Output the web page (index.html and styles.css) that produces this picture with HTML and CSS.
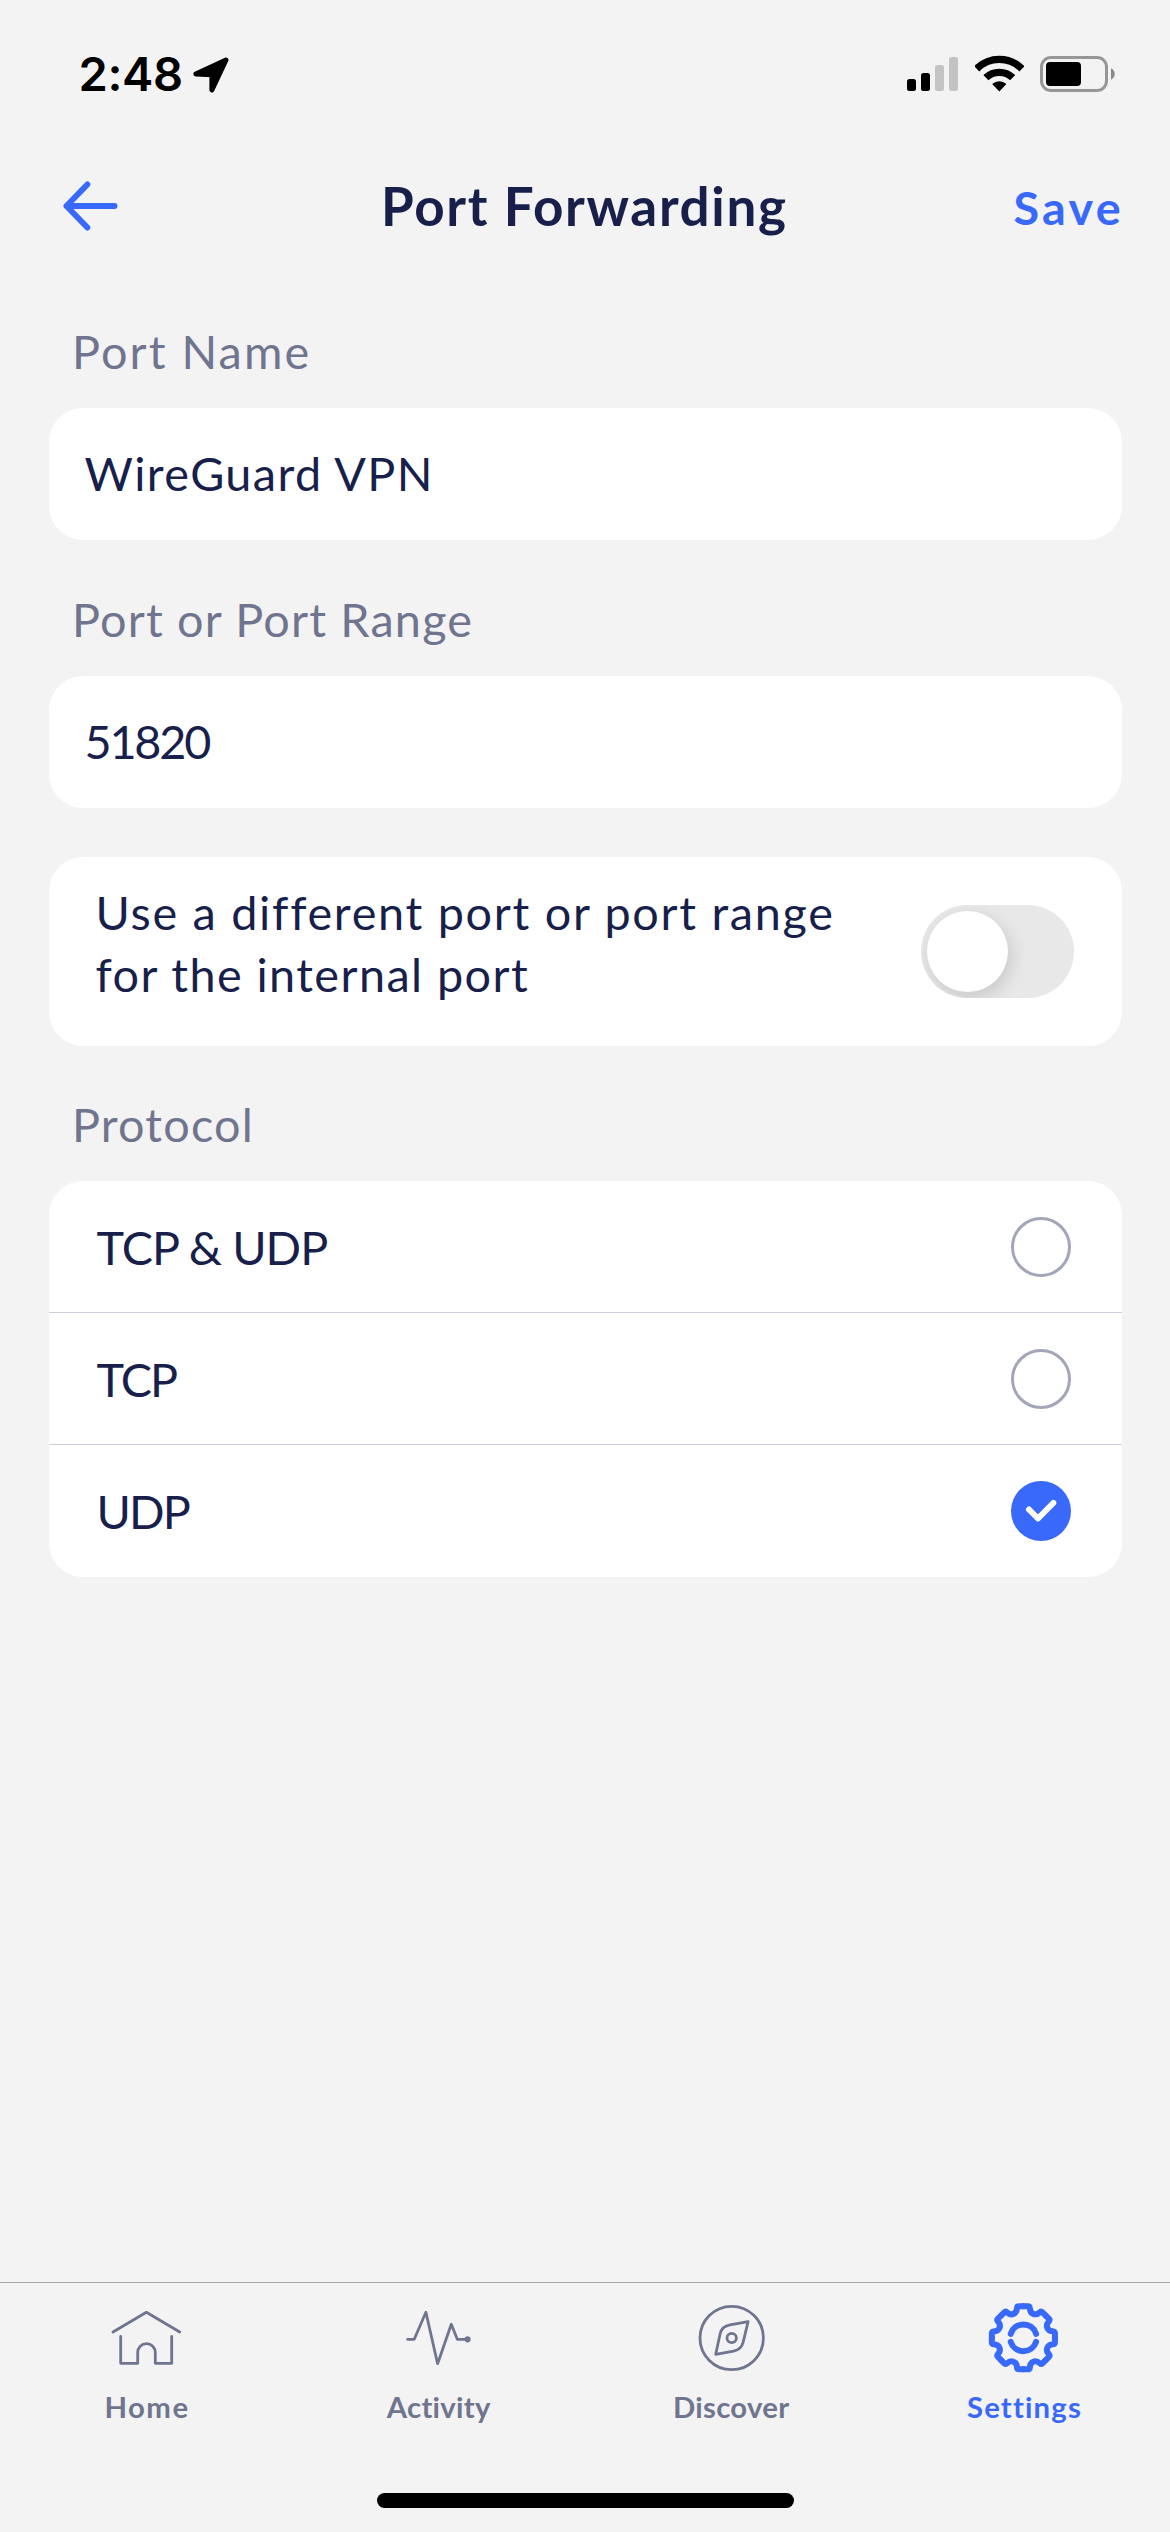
FILE: index.html
```html
<!DOCTYPE html>
<html lang="en">
<head>
<meta charset="utf-8">
<title>Port Forwarding</title>
<link rel="stylesheet" href="styles.css">
</head>
<body>
<div class="screen">
  <div class="status">
    <span class="time">2:48</span>
    <svg class="location" width="36" height="36" viewBox="0 0 36 36"><path d="M2.8 17 33 3 18.9 33V17.8Z" stroke="#000" stroke-width="5" stroke-linejoin="round"/></svg>
    <div class="indicators">
      <svg width="52" height="36" viewBox="0 0 52 36"><rect y="23" width="9" height="12" rx="2.5"/><rect x="14" y="17" width="9" height="18" rx="2.5"/><g fill="#c3c3c3"><rect x="28" y="9" width="9" height="26" rx="2.5"/><rect x="42" y="1" width="9" height="34" rx="2.5"/></g></svg>
      <svg class="wifi" width="49" height="37" viewBox="0 0 49 37"><g fill="none" stroke="#000" stroke-width="7.3"><path d="M1.7 13.8A32 32 0 0 1 46.9 13.8"/><path d="M10.9 22.7A19.3 19.3 0 0 1 37.7 22.7"/></g><path d="M24.3 36.4 17.2 29A10.4 10.4 0 0 1 31.4 29Z"/></svg>
      <svg class="battery" width="76" height="36" viewBox="0 0 76 36"><rect x="1.5" y="1.5" width="65" height="33" rx="9.5" fill="none" stroke="#969696" stroke-width="3"/><rect x="6" y="6" width="35" height="24" rx="4"/><path d="M71 12.3C76 14.5 76 21.5 71 23.7Z" fill="#8a8a8a"/></svg>
    </div>
  </div>

  <header class="nav">
    <svg width="56" height="50" viewBox="0 0 56 50" fill="none" stroke="#3969fa" stroke-width="6" stroke-linecap="round" stroke-linejoin="round"><path d="M51.5 25H3.5M24.3 3.5 3.5 25 24.3 46.5"/></svg>
    <h1>Port Forwarding</h1>
    <a class="save">Save</a>
  </header>

  <main>
    <label class="label name-label">Port Name</label>
    <div class="card field name">WireGuard VPN</div>
    <label class="label">Port or Port Range</label>
    <div class="card field number">51820</div>
    <div class="card option">
      <p><span class="line">Use a different port or port range</span> <span class="line second">for the internal port</span></p>
      <div class="toggle"><div class="knob"></div></div>
    </div>
    <label class="label">Protocol</label>
    <div class="card list">
      <div class="row both"><span>TCP &amp; UDP</span><i class="radio"></i></div>
      <div class="row"><span>TCP</span><i class="radio"></i></div>
      <div class="row"><span>UDP</span><i class="radio checked"><svg width="60" height="60" viewBox="0 0 60 60" fill="none" stroke="#fff" stroke-width="6" stroke-linecap="round" stroke-linejoin="round"><path d="M18 28.5 27 37.5 42.3 22"/></svg></i></div>
    </div>
  </main>

  <footer>
    <nav class="tabs">
      <a class="tab home"><svg viewBox="0 0 70 70"><path d="M2 29 35.4 9.3 68.7 29M9.7 33.3V60.3H26.7V49.4A8.8 8.8 0 0 1 44.3 49.4V60.3H60.7V33.3"/></svg><span>Home</span></a>
      <a class="tab"><svg viewBox="0 0 70 70"><path d="M3.6 36.3H10.2L21.9 9.3 33.6 60.7 47.3 21.3 53.3 36.3H63.6"/><circle cx="63.6" cy="36.3" r="1.7"/></svg><span>Activity</span></a>
      <a class="tab discover"><svg viewBox="0 0 70 70"><circle cx="35.7" cy="35" r="31.7"/><path d="M52.1 18.7 34 21.9Q26 23.3 24.2 30.5L19.7 51.3 37.5 48.2Q45.5 46.5 47.2 39Z"/><circle cx="35.7" cy="35" r="4.7"/></svg><span>Discover</span></a>
      <a class="tab active"><svg viewBox="0 0 70 70"><defs><path id="tooth" d="M0-31.5H4.5Q6.2-31.5 6.4-29.8Q6.6-25.2 9.9-23.9Q13.2-22.5 16.5-25.6Q17.9-26.7 19.1-25.5L22.3-22.3"/></defs><g transform="translate(34.4 34.8)"><use href="#tooth"/><use href="#tooth" transform="rotate(45)"/><use href="#tooth" transform="rotate(90)"/><use href="#tooth" transform="rotate(135)"/><use href="#tooth" transform="rotate(180)"/><use href="#tooth" transform="rotate(225)"/><use href="#tooth" transform="rotate(270)"/><use href="#tooth" transform="rotate(315)"/><path d="M-12.7-4A13.3 13.3 0 0 1 12.7-4M-12.7 4A13.3 13.3 0 0 0 12.7 4"/></g></svg><span>Settings</span></a>
    </nav>
    <div class="home-bar"></div>
  </footer>
</div>
</body>
</html>
```
FILE: styles.css
```css
* { box-sizing: border-box; }

body {
  margin: 0;
  background: #f3f3f3;
  color: #181f4b;
  font: 400 46.75px/60px Lato, "Liberation Sans", sans-serif;
}

svg { display: block; flex: none; }

.screen {
  width: 1170px;
  height: 2532px;
  display: flex;
  flex-direction: column;
}

.status {
  height: 141px;
  padding: 7px 54px 0 78.6px;
  display: flex;
  align-items: center;
  color: #000;
}
.time {
  width: 114px;
  font: 600 47px/60px Inter, sans-serif;
  letter-spacing: -0.39px;
}
.location { margin-top: 2px; }
.indicators {
  margin-left: auto;
  display: flex;
  align-items: center;
}
.wifi { margin: 0 16px 2px; }

.nav {
  height: 129px;
  padding: 0 46px 0 63px;
  display: grid;
  grid-template-columns: 318px auto 1fr;
  align-items: center;
}
.nav h1 {
  margin: 0;
  padding-top: 1px;
  font-size: 53px;
  font-weight: 700;
  letter-spacing: 1.66px;
}
.save {
  justify-self: end;
  padding-top: 2px;
  color: #3969fa;
  font-weight: 700;
  letter-spacing: 3.3px;
}

main {
  flex: 1;
  padding: 51px 48px 0 48.5px;
  display: flex;
  flex-direction: column;
}
.label {
  margin-bottom: 27px;
  padding-left: 23.5px;
  color: #70758f;
  letter-spacing: 1.2px;
}
.name-label { letter-spacing: 2.09px; }
.card {
  margin-bottom: 49px;
  background: #fff;
  border-radius: 34px;
}
.field {
  height: 132px;
  padding-left: 36px;
  padding-bottom: 2px;
  line-height: 130px;
}
.name { letter-spacing: 1.4px; }
.number { letter-spacing: -2.2px; }

.option {
  height: 189px;
  padding: 25px 48px 0 47px;
  margin-bottom: 48px;
  display: flex;
  justify-content: space-between;
}
.option p {
  margin: 0;
  line-height: 61.5px;
  letter-spacing: 1.72px;
}
.line { display: block; }
.second { letter-spacing: 1.42px; }
.toggle {
  width: 153px;
  height: 93px;
  margin-top: 23px;
  padding: 6px;
  border-radius: 47px;
  background: #e8e8e8;
  overflow: hidden;
}
.knob {
  width: 81px;
  height: 81px;
  border-radius: 50%;
  background: #fff;
  box-shadow: 3px 6px 18px rgba(0, 0, 0, 0.14);
}

.list { height: 396px; }
.row {
  height: 132px;
  padding: 0 51px 0 48px;
  display: flex;
  align-items: center;
  justify-content: space-between;
  letter-spacing: -1.9px;
}
.both { letter-spacing: -0.95px; }
.row:not(:last-child) { border-bottom: 1px solid #cfd0da; }
.radio {
  width: 60px;
  height: 60px;
  border: 3px solid #a3a6b8;
  border-radius: 50%;
}
.checked {
  border: 0;
  background: #3969fa;
}

footer {
  height: 250px;
  border-top: 1px solid #a8a8a8;
}
.tabs {
  padding-top: 20px;
  display: grid;
  grid-template-columns: repeat(4, 1fr);
}
.tab {
  display: flex;
  flex-direction: column;
  align-items: center;
  gap: 16px;
  color: #70758f;
  font-size: 29.3px;
  font-weight: 700;
  line-height: 36px;
  letter-spacing: 0.3px;
}
.tab svg {
  width: 70px;
  height: 70px;
  overflow: visible;
  fill: none;
  stroke: currentColor;
  stroke-width: 2.8px;
  stroke-linecap: round;
  stroke-linejoin: round;
}
.home { letter-spacing: 1.5px; }
.home span, .active span { padding-left: 1.5px; }
.active {
  color: #3969fa;
  letter-spacing: 1.17px;
}
.active svg { stroke-width: 6px; }

.home-bar {
  width: 417px;
  height: 15px;
  margin: 68px auto 0;
  border-radius: 8px;
  background: #000;
}
```
